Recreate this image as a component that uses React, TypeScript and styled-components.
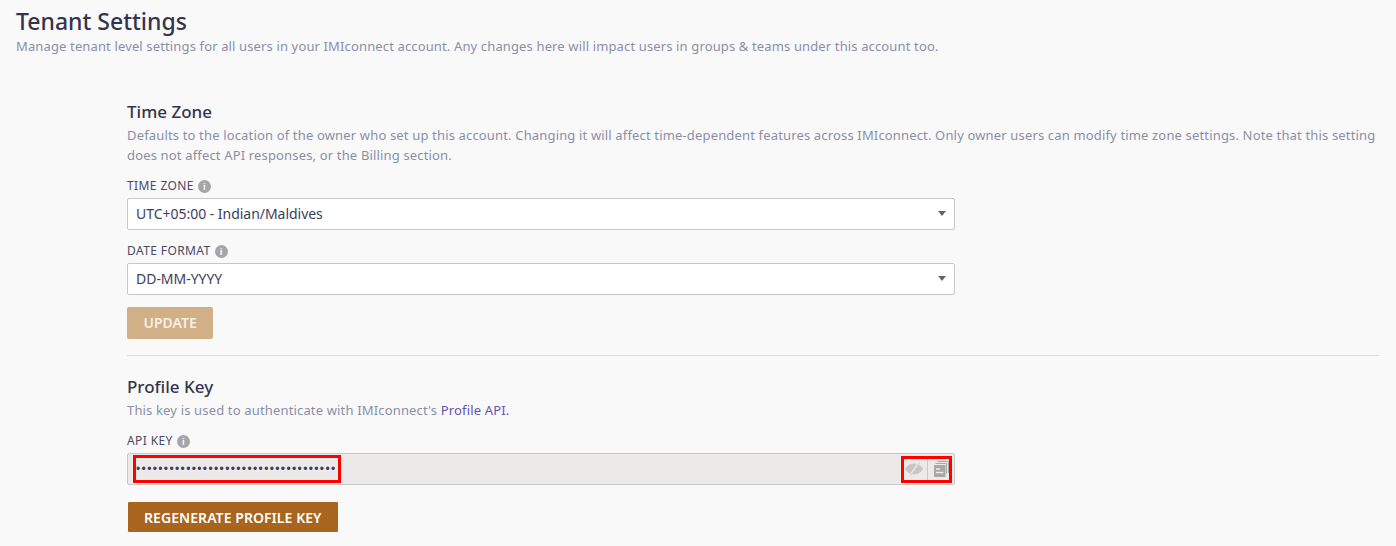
import React from 'react';
import styled, { createGlobalStyle } from 'styled-components';

const GlobalStyle = createGlobalStyle`
  html, body {
    margin: 0;
    padding: 0;
    background: #f9f9f9;
    font-family: "Noto Sans", "Open Sans", sans-serif;
    color: #34344e;
  }
`;

const Page = styled.div`
  width: 1396px;
  height: 546px;
  overflow: hidden;
  box-sizing: border-box;
  padding: 2px 17px 0 16px;
`;

const Title = styled.h1`
  margin: 0;
  font-size: 23px;
  line-height: 38px;
  font-weight: 500;
  color: #34344e;
`;

const Subtitle = styled.p`
  margin: 0;
  font-size: 13px;
  line-height: 13px;
  letter-spacing: 0.135px;
  color: #8a8fa8;
`;

const Content = styled.div`
  margin: 47px 0 0 111px;
`;

const SectionTitle = styled.h2`
  margin: 0;
  font-size: 17px;
  line-height: 24px;
  font-weight: 500;
  color: #34344e;
`;

const Description = styled.p`
  margin: 1px 0 0;
  font-size: 13px;
  line-height: 20px;
  letter-spacing: 0.158px;
  color: #8a8fa8;
`;

const DocLink = styled.a`
  color: #6354ad;
  text-decoration: none;
`;

const Field = styled.div<{ $top: number }>`
  margin-top: ${p => p.$top}px;
  width: 828px;
`;

const Label = styled.div`
  display: flex;
  align-items: center;
  gap: 4px;
  height: 16px;
  margin-bottom: 4px;
  font-size: 12px;
  line-height: 16px;
  letter-spacing: 0.4px;
  color: #4a4a62;
`;

const InfoBadge = styled.span`
  display: inline-flex;
  align-items: center;
  justify-content: center;
  width: 13px;
  height: 13px;
  border-radius: 50%;
  background: #a6a6a6;
  color: #f9f9f9;
  font-size: 9px;
  line-height: 13px;
  font-weight: 700;
  letter-spacing: 0;
`;

const Select = styled.div`
  display: flex;
  align-items: center;
  justify-content: space-between;
  box-sizing: border-box;
  height: 32px;
  padding: 0 8px 1px;
  background: #fff;
  border: 1px solid #c8c8c8;
  border-radius: 2px;
  font-size: 14px;
  letter-spacing: -0.03px;
  color: #3d3d5c;
`;

const Caret = styled.span`
  width: 0;
  height: 0;
  border-left: 4px solid transparent;
  border-right: 4px solid transparent;
  border-top: 5px solid #666;
`;

const Button = styled.button<{ $disabled?: boolean }>`
  display: block;
  box-sizing: border-box;
  height: 32px;
  border: 0;
  border-radius: 2px;
  padding: 0 16.500px 1px;
  background: ${p => (p.$disabled ? '#d1af87' : '#a9651e')};
  color: ${p => (p.$disabled ? '#f6efe6' : '#fff')};
  font-family: inherit;
  font-size: 14px;
  font-weight: 600;
`;

const OutlinedButton = styled(Button)`
  border: 1px solid #f9f9f9;
  padding: 0 16px;
  letter-spacing: 0.06px;
`;

const Divider = styled.hr`
  margin: 16px 0 19px;
  border: 0;
  border-top: 1px solid #dcdcdc;
`;

const KeyBox = styled.div`
  display: flex;
  align-items: stretch;
  box-sizing: border-box;
  height: 32px;
  background: #ebeae8;
  border: 1px solid #c8c8c8;
  border-radius: 2px;
`;

const KeyValue = styled.div`
  flex: 1;
  display: flex;
  align-items: center;
  padding-left: 5px;
`;

const Highlight = styled.span`
  display: flex;
  align-items: center;
  box-sizing: border-box;
  width: 208px;
  height: 28px;
  border: 3px solid #f00;
`;

const Dots = styled.span`
  font-size: 12px;
  letter-spacing: 1.370px;
  color: #3d3d5c;
  font-family: "Liberation Sans", sans-serif;
  white-space: nowrap;
`;

const KeyActions = styled.div`
  display: flex;
  align-items: center;
  align-self: center;
  box-sizing: border-box;
  width: 51px;
  height: 27px;
  margin-right: 2px;
  border: 3px solid #f00;
`;

const EyeCell = styled.span`
  display: flex;
  align-items: center;
  box-sizing: border-box;
  width: 23px;
  height: 100%;
  padding-left: 1px;
`;

const CopyCell = styled.span`
  display: flex;
  align-items: center;
  justify-content: flex-end;
  box-sizing: border-box;
  width: 22px;
  height: 100%;
  border-left: 1px solid #c8c8c8;
`;

const EyeOffIcon = () => (
  <svg width="18" height="14" viewBox="0 0 18 14">
    <path d="M0 7c2-3.200 5-5.500 9-5.500S16 3.800 18 7c-2 3.200-5 5.500-9 5.500S2 10.200 0 7z" fill="#c6c6c4" />
    <path d="M14 0.500 5 13.500" stroke="#ebeae8" strokeWidth="2" />
    <path d="M14.500 0.500 5.500 13.500" stroke="#cfcecc" strokeWidth="1" />
  </svg>
);

const CopyIcon = () => (
  <svg width="15" height="16" viewBox="0 0 15 16">
    <path d="M3.500 0.500h11v11.500" fill="none" stroke="#a8a8a8" />
    <path d="M1.500 2.500h11v10" fill="none" stroke="#a8a8a8" />
    <rect x="0" y="4" width="11.500" height="12" fill="#a8a8a8" />
    <path d="M2 8h4M2 11.500h7.500" stroke="#ebeae8" strokeWidth="1.500" />
  </svg>
);

const App: React.FC = () => {
  return (
    <Page>
      <GlobalStyle />
      <Title>Tenant Settings</Title>
      <Subtitle>
        Manage tenant level settings for all users in your IMIconnect account. Any changes here will impact users in groups &amp; teams under this account too.
      </Subtitle>
      <Content>
        <SectionTitle>Time Zone</SectionTitle>
        <Description>
          Defaults to the location of the owner who set up this account. Changing it will affect time-dependent features across IMIconnect. Only owner users can modify time zone settings. Note that this setting does not affect API responses, or the Billing section.
        </Description>
        <Field $top={13}>
          <Label>TIME ZONE <InfoBadge>i</InfoBadge></Label>
          <Select>UTC+05:00 - Indian/Maldives<Caret /></Select>
        </Field>
        <Field $top={13}>
          <Label>DATE FORMAT <InfoBadge>i</InfoBadge></Label>
          <Select>DD-MM-YYYY<Caret /></Select>
        </Field>
        <Field $top={12}>
          <Button $disabled>UPDATE</Button>
        </Field>
        <Divider />
        <SectionTitle>Profile Key</SectionTitle>
        <Description>
          This key is used to authenticate with IMIconnect's <DocLink>Profile API.</DocLink>
        </Description>
        <Field $top={13}>
          <Label>API KEY <InfoBadge>i</InfoBadge></Label>
          <KeyBox>
            <KeyValue>
              <Highlight><Dots>••••••••••••••••••••••••••••••••••••</Dots></Highlight>
            </KeyValue>
            <KeyActions>
              <EyeCell><EyeOffIcon /></EyeCell>
              <CopyCell><CopyIcon /></CopyCell>
            </KeyActions>
          </KeyBox>
        </Field>
        <Field $top={16}>
          <OutlinedButton>REGENERATE PROFILE KEY</OutlinedButton>
        </Field>
      </Content>
    </Page>
  );
};

export default App;
